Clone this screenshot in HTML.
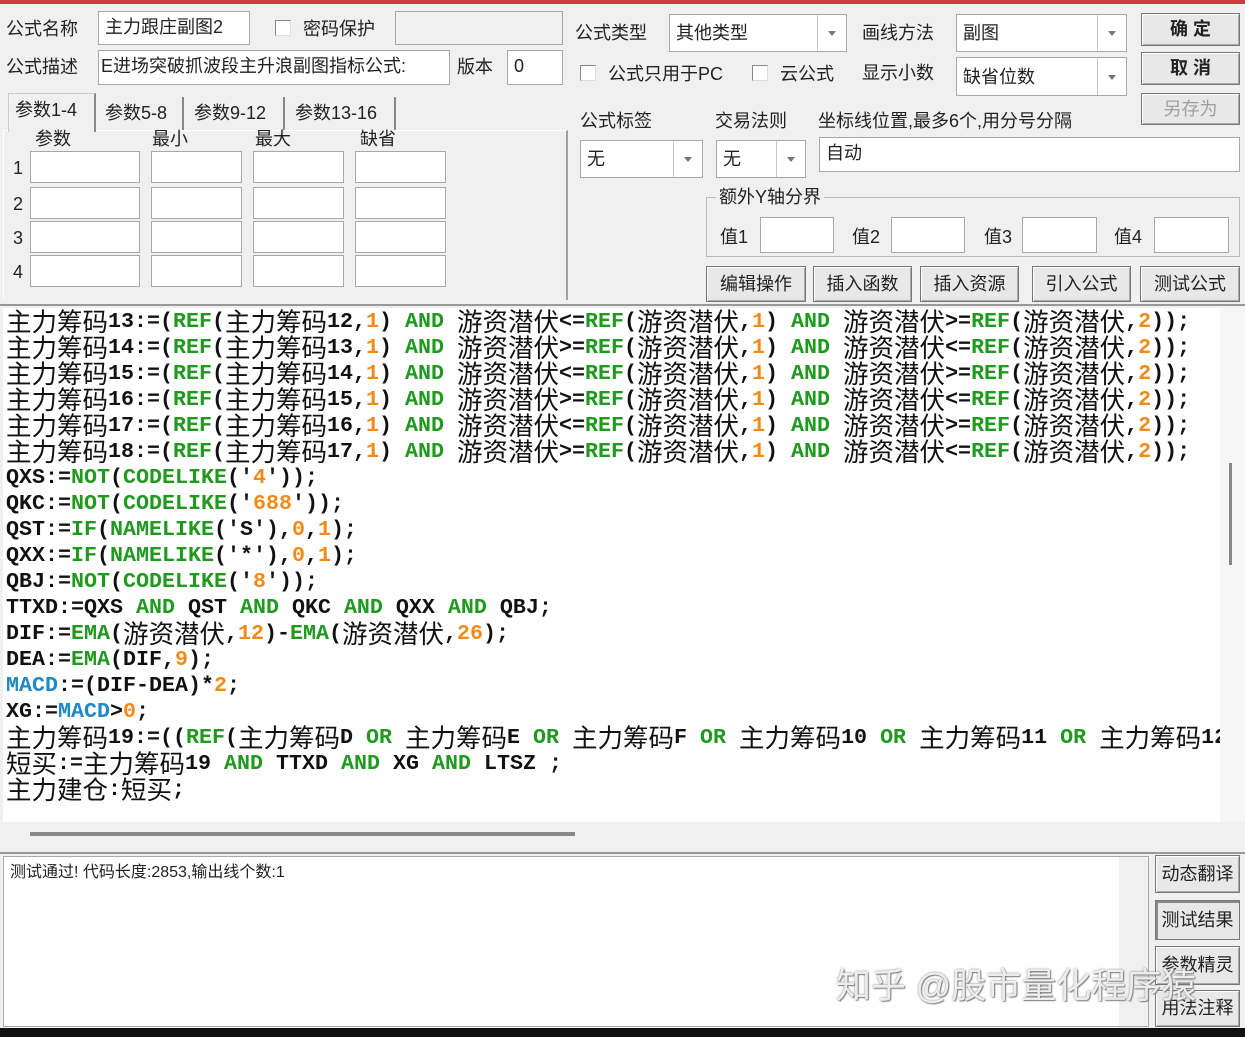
<!DOCTYPE html>
<html><head><meta charset="utf-8"><style>
*{box-sizing:border-box;margin:0;padding:0}
body{width:1245px;height:1037px;background:#f0f0f0;position:relative;overflow:hidden;font-family:"Liberation Sans","Noto Sans CJK SC",sans-serif;font-size:18px;color:#222}
.a{position:absolute}
.lbl{position:absolute;font-size:18px;line-height:22px;white-space:nowrap}
.in{position:absolute;background:#fff;border:1px solid #a8a8a8;font-size:18px;line-height:30px;padding-left:6px;white-space:nowrap;overflow:hidden}
.cb{position:absolute;width:16px;height:16px;background:#fff;border:1px solid #888;border-right-color:#ddd;border-bottom-color:#ddd}
.combo{position:absolute;background:#fff;border:1px solid #a8a8a8;font-size:18px;padding-left:6px;white-space:nowrap}
.combo .dd{position:absolute;top:0;bottom:0;right:0;border-left:1px solid #c8c8c8;background:#fff}
.combo .dd:after{content:"";position:absolute;left:50%;top:50%;margin-left:-4px;margin-top:-2px;border-left:4px solid transparent;border-right:4px solid transparent;border-top:5px solid #777}
.btn{position:absolute;background:#e8e8e8;border:1px solid #777;box-shadow:inset 1px 1px 0 #fff,inset -1px -1px 0 #aaa;font-size:18px;text-align:center;white-space:nowrap}
.code{position:absolute;left:3px;top:308px;width:1217px;height:514px;background:#fff;overflow:hidden}
.ln{position:absolute;left:3px;height:26px;line-height:26px;white-space:pre;font-family:"Liberation Mono",monospace;font-weight:bold;font-size:21.67px;color:#111}
.ln i{font-style:normal;font-weight:normal;font-family:"Noto Sans CJK SC","WenQuanYi Zen Hei",sans-serif;font-size:25.5px;display:inline-block;vertical-align:top;line-height:24px;height:26px}
.g{color:#1f9a1f}.o{color:#f28a16}.b{color:#1e88c8}
</style></head><body>
<div class="a" style="left:0;top:0;width:1245px;height:4px;background:#cf3a3e"></div>
<div class="a" style="left:0;top:1028px;width:1245px;height:9px;background:#111"></div>

<div class="lbl" style="left:6px;top:18px">公式名称</div>
<div class="in" style="left:98px;top:11px;width:152px;height:34px">主力跟庄副图2</div>
<div class="cb" style="left:275px;top:20px"></div>
<div class="lbl" style="left:303px;top:18px">密码保护</div>
<div class="in" style="left:395px;top:11px;width:168px;height:34px;background:#f0f0f0"></div>
<div class="lbl" style="left:6px;top:56px">公式描述</div>
<div class="in" style="left:98px;top:50px;width:352px;height:35px;padding-left:2px">E进场突破抓波段主升浪副图指标公式:</div>
<div class="lbl" style="left:457px;top:56px">版本</div>
<div class="in" style="left:507px;top:50px;width:56px;height:35px">0</div>

<div class="a" style="left:3px;top:130px;width:565px;height:170px;border:1px solid #fff;border-right:2px solid #a0a0a0;border-bottom:none"></div>
<div class="a" style="left:8px;top:93px;width:88px;height:39px;border:1px solid #ccc;border-bottom:none;background:#f0f0f0;border-right:2px solid #888"></div>
<div class="lbl" style="left:15px;top:99px">参数1-4</div>
<div class="a" style="left:182px;top:97px;width:2px;height:33px;background:#888"></div>
<div class="lbl" style="left:105px;top:102px">参数5-8</div>
<div class="a" style="left:283px;top:97px;width:2px;height:33px;background:#888"></div>
<div class="lbl" style="left:194px;top:102px">参数9-12</div>
<div class="a" style="left:394px;top:97px;width:2px;height:33px;background:#888"></div>
<div class="lbl" style="left:295px;top:102px">参数13-16</div>
<div class="lbl" style="left:35px;top:128px">参数</div>
<div class="lbl" style="left:152px;top:128px">最小</div>
<div class="lbl" style="left:255px;top:128px">最大</div>
<div class="lbl" style="left:360px;top:128px">缺省</div>
<div class="lbl" style="left:13px;top:157px">1</div>
<div class="lbl" style="left:13px;top:193px">2</div>
<div class="lbl" style="left:13px;top:227px">3</div>
<div class="lbl" style="left:13px;top:261px">4</div>
<div class="in" style="left:30px;top:151px;width:110px;height:32px"></div><div class="in" style="left:151px;top:151px;width:91px;height:32px"></div><div class="in" style="left:253px;top:151px;width:91px;height:32px"></div><div class="in" style="left:355px;top:151px;width:91px;height:32px"></div>
<div class="in" style="left:30px;top:187px;width:110px;height:32px"></div><div class="in" style="left:151px;top:187px;width:91px;height:32px"></div><div class="in" style="left:253px;top:187px;width:91px;height:32px"></div><div class="in" style="left:355px;top:187px;width:91px;height:32px"></div>
<div class="in" style="left:30px;top:221px;width:110px;height:32px"></div><div class="in" style="left:151px;top:221px;width:91px;height:32px"></div><div class="in" style="left:253px;top:221px;width:91px;height:32px"></div><div class="in" style="left:355px;top:221px;width:91px;height:32px"></div>
<div class="in" style="left:30px;top:255px;width:110px;height:32px"></div><div class="in" style="left:151px;top:255px;width:91px;height:32px"></div><div class="in" style="left:253px;top:255px;width:91px;height:32px"></div><div class="in" style="left:355px;top:255px;width:91px;height:32px"></div>

<div class="lbl" style="left:575px;top:22px">公式类型</div>
<div class="combo" style="left:669px;top:14px;width:178px;height:38px;line-height:36px">其他类型<div class="dd" style="width:29px"></div></div>
<div class="lbl" style="left:862px;top:22px">画线方法</div>
<div class="combo" style="left:956px;top:14px;width:171px;height:38px;line-height:36px">副图<div class="dd" style="width:29px"></div></div>
<div class="cb" style="left:580px;top:65px"></div>
<div class="lbl" style="left:608px;top:63px">公式只用于PC</div>
<div class="cb" style="left:752px;top:65px"></div>
<div class="lbl" style="left:780px;top:63px">云公式</div>
<div class="lbl" style="left:862px;top:62px">显示小数</div>
<div class="combo" style="left:956px;top:57px;width:171px;height:39px;line-height:38px">缺省位数<div class="dd" style="width:29px"></div></div>
<div class="btn" style="left:1141px;top:13px;width:99px;height:33px;line-height:31px;font-weight:bold">确 定</div>
<div class="btn" style="left:1141px;top:52px;width:99px;height:33px;line-height:31px;font-weight:bold">取 消</div>
<div class="btn" style="left:1141px;top:93px;width:99px;height:32px;line-height:30px;color:#a0a0a0">另存为</div>

<div class="lbl" style="left:580px;top:110px">公式标签</div>
<div class="lbl" style="left:715px;top:110px">交易法则</div>
<div class="lbl" style="left:818px;top:110px">坐标线位置,最多6个,用分号分隔</div>
<div class="combo" style="left:580px;top:140px;width:123px;height:38px;line-height:36px">无<div class="dd" style="width:29px"></div></div>
<div class="combo" style="left:716px;top:140px;width:90px;height:38px;line-height:36px">无<div class="dd" style="width:29px"></div></div>
<div class="in" style="left:819px;top:137px;width:421px;height:35px">自动</div>

<div class="a" style="left:706px;top:197px;width:534px;height:60px;border:1px solid #bbb"></div>
<div class="lbl" style="left:716px;top:186px;background:#f0f0f0;padding:0 3px">额外Y轴分界</div>
<div class="lbl" style="left:720px;top:226px">值1</div><div class="in" style="left:760px;top:217px;width:74px;height:36px"></div>
<div class="lbl" style="left:852px;top:226px">值2</div><div class="in" style="left:891px;top:217px;width:74px;height:36px"></div>
<div class="lbl" style="left:984px;top:226px">值3</div><div class="in" style="left:1022px;top:217px;width:75px;height:36px"></div>
<div class="lbl" style="left:1114px;top:226px">值4</div><div class="in" style="left:1154px;top:217px;width:75px;height:36px"></div>

<div class="btn" style="left:706px;top:266px;width:100px;height:36px;line-height:34px">编辑操作</div>
<div class="btn" style="left:813px;top:266px;width:99px;height:36px;line-height:34px">插入函数</div>
<div class="btn" style="left:920px;top:266px;width:99px;height:36px;line-height:34px">插入资源</div>
<div class="btn" style="left:1032px;top:266px;width:99px;height:36px;line-height:34px">引入公式</div>
<div class="btn" style="left:1140px;top:266px;width:100px;height:36px;line-height:34px">测试公式</div>

<div class="a" style="left:0;top:304px;width:1245px;height:2px;background:#999"></div>
<div class="code">
<div class="ln" style="top:1px"><i>主力筹码</i>13:=(<span class="g">REF</span>(<i>主力筹码</i>12,<span class="o">1</span>) <span class="g">AND</span> <i>游资潜伏</i>&lt;=<span class="g">REF</span>(<i>游资潜伏</i>,<span class="o">1</span>) <span class="g">AND</span> <i>游资潜伏</i>&gt;=<span class="g">REF</span>(<i>游资潜伏</i>,<span class="o">2</span>));</div>
<div class="ln" style="top:27px"><i>主力筹码</i>14:=(<span class="g">REF</span>(<i>主力筹码</i>13,<span class="o">1</span>) <span class="g">AND</span> <i>游资潜伏</i>&gt;=<span class="g">REF</span>(<i>游资潜伏</i>,<span class="o">1</span>) <span class="g">AND</span> <i>游资潜伏</i>&lt;=<span class="g">REF</span>(<i>游资潜伏</i>,<span class="o">2</span>));</div>
<div class="ln" style="top:53px"><i>主力筹码</i>15:=(<span class="g">REF</span>(<i>主力筹码</i>14,<span class="o">1</span>) <span class="g">AND</span> <i>游资潜伏</i>&lt;=<span class="g">REF</span>(<i>游资潜伏</i>,<span class="o">1</span>) <span class="g">AND</span> <i>游资潜伏</i>&gt;=<span class="g">REF</span>(<i>游资潜伏</i>,<span class="o">2</span>));</div>
<div class="ln" style="top:79px"><i>主力筹码</i>16:=(<span class="g">REF</span>(<i>主力筹码</i>15,<span class="o">1</span>) <span class="g">AND</span> <i>游资潜伏</i>&gt;=<span class="g">REF</span>(<i>游资潜伏</i>,<span class="o">1</span>) <span class="g">AND</span> <i>游资潜伏</i>&lt;=<span class="g">REF</span>(<i>游资潜伏</i>,<span class="o">2</span>));</div>
<div class="ln" style="top:105px"><i>主力筹码</i>17:=(<span class="g">REF</span>(<i>主力筹码</i>16,<span class="o">1</span>) <span class="g">AND</span> <i>游资潜伏</i>&lt;=<span class="g">REF</span>(<i>游资潜伏</i>,<span class="o">1</span>) <span class="g">AND</span> <i>游资潜伏</i>&gt;=<span class="g">REF</span>(<i>游资潜伏</i>,<span class="o">2</span>));</div>
<div class="ln" style="top:131px"><i>主力筹码</i>18:=(<span class="g">REF</span>(<i>主力筹码</i>17,<span class="o">1</span>) <span class="g">AND</span> <i>游资潜伏</i>&gt;=<span class="g">REF</span>(<i>游资潜伏</i>,<span class="o">1</span>) <span class="g">AND</span> <i>游资潜伏</i>&lt;=<span class="g">REF</span>(<i>游资潜伏</i>,<span class="o">2</span>));</div>
<div class="ln" style="top:157px">QXS:=<span class="g">NOT</span>(<span class="g">CODELIKE</span>('<span class="o">4</span>'));</div>
<div class="ln" style="top:183px">QKC:=<span class="g">NOT</span>(<span class="g">CODELIKE</span>('<span class="o">688</span>'));</div>
<div class="ln" style="top:209px">QST:=<span class="g">IF</span>(<span class="g">NAMELIKE</span>('S'),<span class="o">0</span>,<span class="o">1</span>);</div>
<div class="ln" style="top:235px">QXX:=<span class="g">IF</span>(<span class="g">NAMELIKE</span>('*'),<span class="o">0</span>,<span class="o">1</span>);</div>
<div class="ln" style="top:261px">QBJ:=<span class="g">NOT</span>(<span class="g">CODELIKE</span>('<span class="o">8</span>'));</div>
<div class="ln" style="top:287px">TTXD:=QXS <span class="g">AND</span> QST <span class="g">AND</span> QKC <span class="g">AND</span> QXX <span class="g">AND</span> QBJ;</div>
<div class="ln" style="top:313px">DIF:=<span class="g">EMA</span>(<i>游资潜伏</i>,<span class="o">12</span>)-<span class="g">EMA</span>(<i>游资潜伏</i>,<span class="o">26</span>);</div>
<div class="ln" style="top:339px">DEA:=<span class="g">EMA</span>(DIF,<span class="o">9</span>);</div>
<div class="ln" style="top:365px"><span class="b">MACD</span>:=(DIF-DEA)*<span class="o">2</span>;</div>
<div class="ln" style="top:391px">XG:=<span class="b">MACD</span>&gt;<span class="o">0</span>;</div>
<div class="ln" style="top:417px"><i>主力筹码</i>19:=((<span class="g">REF</span>(<i>主力筹码</i>D <span class="g">OR</span> <i>主力筹码</i>E <span class="g">OR</span> <i>主力筹码</i>F <span class="g">OR</span> <i>主力筹码</i>10 <span class="g">OR</span> <i>主力筹码</i>11 <span class="g">OR</span> <i>主力筹码</i>12</div>
<div class="ln" style="top:443px"><i>短买</i>:=<i>主力筹码</i>19 <span class="g">AND</span> TTXD <span class="g">AND</span> XG <span class="g">AND</span> LTSZ ;</div>
<div class="ln" style="top:469px"><i>主力建仓</i>:<i>短买</i>;</div>
</div>
<div class="a" style="left:1220px;top:308px;width:25px;height:514px;background:#f6f6f6"></div>
<div class="a" style="left:1229px;top:463px;width:3px;height:102px;background:#888"></div>
<div class="a" style="left:30px;top:832px;width:545px;height:4px;background:#888"></div>
<div class="a" style="left:0;top:852px;width:1245px;height:2px;background:#999"></div>
<div class="a" style="left:3px;top:856px;width:1146px;height:171px;background:#fff;border:1px solid #aaa"></div>
<div class="a" style="left:1119px;top:857px;width:29px;height:169px;background:#f0f0f0"></div>
<div class="lbl" style="left:10px;top:862px;font-size:16px">测试通过! 代码长度:2853,输出线个数:1</div>
<div class="btn" style="left:1155px;top:855px;width:85px;height:38px;line-height:36px">动态翻译</div>
<div class="btn" style="left:1155px;top:900px;width:85px;height:40px;line-height:38px;box-shadow:inset 2px 2px 0 #888">测试结果</div>
<div class="btn" style="left:1155px;top:946px;width:85px;height:39px;line-height:37px">参数精灵</div>
<div class="btn" style="left:1155px;top:990px;width:85px;height:37px;line-height:35px">用法注释</div>
<div class="lbl" style="left:836px;top:966px;font-size:35px;line-height:42px;color:rgba(255,255,255,.85);text-shadow:0 0 2px #777,1px 1px 1px #888">知乎 @股市量化程序猿</div>
</body></html>
